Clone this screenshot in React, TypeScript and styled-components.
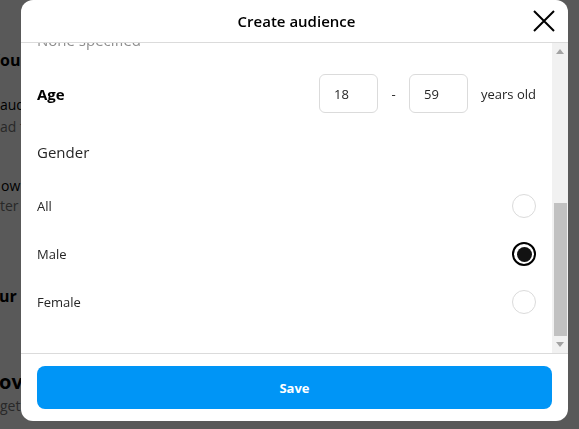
import { useLayoutEffect, useRef } from 'react';
import styled, { createGlobalStyle } from 'styled-components';

const GlobalStyle = createGlobalStyle`
  * {
    box-sizing: border-box;
  }

  html,
  body {
    margin: 0;
    padding: 0;
    height: 100%;
    overflow: hidden;
    background: #ffffff;
    font-family: 'Open Sans', 'Noto Sans', sans-serif;
    color: #262626;
  }
`;

/* page behind the modal, only its left strip shows */

const Page = styled.main`
  width: 21px;
  overflow: hidden;
  display: flex;
  flex-direction: column;
  padding-top: 50px;
`;

const BackLine = styled.div<{ $shift?: number; $top: number; $bold?: boolean; $muted?: boolean; $size?: number }>`
  margin-top: ${(p) => p.$top}px;
  margin-left: ${(p) => p.$shift ?? 0}px;
  font-size: ${(p) => p.$size ?? 14}px;
  line-height: 20px;
  font-weight: ${(p) => (p.$bold ? 700 : 400)};
  color: ${(p) => (p.$muted ? '#737373' : '#000000')};
  white-space: nowrap;
`;

/* overlay + modal */

const Overlay = styled.div`
  position: fixed;
  inset: 0;
  background: rgba(0, 0, 0, 0.65);
  display: flex;
  align-items: flex-start;
  padding-left: 21px;
`;

const Modal = styled.div`
  width: 547px;
  height: 421px;
  background: #ffffff;
  border-radius: 12px;
  display: flex;
  flex-direction: column;
  overflow: hidden;
`;

const Header = styled.header`
  height: 43px;
  flex: none;
  border-bottom: 1px solid #dbdbdb;
  display: grid;
  grid-template-columns: 1fr auto 1fr;
  align-items: center;
  padding: 0 12px 0 16px;
`;

const Title = styled.h1`
  grid-column: 2;
  margin: 0;
  font-size: 15px;
  font-weight: 600;
  color: #000000;
`;

const CloseButton = styled.button`
  grid-column: 3;
  justify-self: end;
  border: 0;
  padding: 0;
  background: none;
  display: flex;
  cursor: pointer;
`;

const BodyFrame = styled.div`
  flex: 1;
  min-height: 0;
  display: flex;
`;

const Body = styled.div`
  flex: 1;
  overflow: hidden;
  padding: 24px 16px 27px;
`;

/* classic scrollbar, thumb sits at the bottom since the body is scrolled down */

const ScrollBar = styled.div`
  width: 16px;
  flex: none;
  background: #f1f1f1;
  display: flex;
  flex-direction: column;
`;

const ScrollArrow = styled.div`
  height: 17px;
  flex: none;
  display: flex;
  align-items: center;
  justify-content: center;
`;

const ScrollTrack = styled.div`
  flex: 1;
  display: flex;
  flex-direction: column;
  justify-content: flex-end;
  padding: 0 1px 0 2px;
`;

const ScrollThumb = styled.div<{ $size: number }>`
  height: ${(p) => p.$size}px;
  background: #c1c1c1;
`;

const Field = styled.section`
  display: flex;
  flex-direction: column;
  gap: 8px;
  padding-bottom: 28px;
`;

const FieldLabel = styled.h2`
  margin: 0;
  font-size: 15px;
  line-height: 24px;
  font-weight: 700;
  color: #000000;
`;

const Hint = styled.p`
  margin: 0;
  font-size: 15px;
  line-height: 20px;
  color: #8e8e8e;
`;

const NameInput = styled.input`
  height: 40px;
  margin-top: 4px;
  border: 1px solid #dbdbdb;
  border-radius: 6px;
  padding: 0 15px;
  font: inherit;
  font-size: 13px;
`;

const AgeRow = styled.div`
  display: flex;
  align-items: center;
  height: 39px;
  margin-top: 24px;
`;

const AgeLabel = styled(FieldLabel)`
  flex: 1;
`;

const AgeInput = styled.input`
  width: 59px;
  height: 39px;
  border: 1px solid #dbdbdb;
  border-radius: 6px;
  padding: 0 14px;
  font: inherit;
  font-size: 13px;
  color: #262626;
  outline: none;
`;

const Dash = styled.span`
  width: 31px;
  text-align: center;
  font-size: 13px;
`;

const Unit = styled.span`
  margin-left: 13px;
  font-size: 13px;
  color: #262626;
`;

const GenderLabel = styled.h3`
  margin: 27px 0 18px;
  font-size: 15px;
  line-height: 24px;
  font-weight: 400;
  color: #262626;
`;

const OptionRow = styled.label`
  height: 48px;
  display: flex;
  align-items: center;
  justify-content: space-between;
  font-size: 13px;
  color: #262626;
  cursor: pointer;
`;

const Radio = styled.span<{ $checked: boolean }>`
  width: 24px;
  height: 24px;
  border-radius: 50%;
  border: ${(p) => (p.$checked ? '2px solid #000000' : '1px solid #dbdbdb')};
  display: flex;
  align-items: center;
  justify-content: center;

  &::after {
    content: '';
    display: ${(p) => (p.$checked ? 'block' : 'none')};
    width: 15px;
    height: 15px;
    border-radius: 50%;
    background: #121212;
  }
`;

const Footer = styled.footer`
  flex: none;
  border-top: 1px solid #dbdbdb;
  padding: 12px 16px;
`;

const SaveButton = styled.button`
  width: 100%;
  height: 43px;
  border: 0;
  border-radius: 8px;
  background: #0095f6;
  color: #ffffff;
  font-family: inherit;
  font-size: 13px;
  font-weight: 700;
  cursor: pointer;
`;

const genders = [
  { label: 'All', checked: false },
  { label: 'Male', checked: true },
  { label: 'Female', checked: false },
];

export default function App() {
  const bodyRef = useRef<HTMLDivElement>(null);

  useLayoutEffect(() => {
    if (bodyRef.current) bodyRef.current.scrollTop = bodyRef.current.scrollHeight;
  }, []);

  return (
    <>
      <GlobalStyle />
      <Page>
        <BackLine $top={0} $shift={-10} $bold $size={16}>You</BackLine>
        <BackLine $top={25}>audi</BackLine>
        <BackLine $top={2} $muted>ad f</BackLine>
        <BackLine $top={39} $shift={1}>ow</BackLine>
        <BackLine $top={0} $muted>ter</BackLine>
        <BackLine $top={70} $shift={-1} $bold $size={16}>ur</BackLine>
        <BackLine $top={66} $shift={-1} $bold $size={20}>ove</BackLine>
        <BackLine $top={4} $muted>get</BackLine>
      </Page>
      <Overlay>
        <Modal>
          <Header>
            <Title>Create audience</Title>
            <CloseButton aria-label="Close">
              <svg width="24" height="24" viewBox="0 0 24 24">
                <path d="M2 2 L22 22 M22 2 L2 22" stroke="#000" strokeWidth="2" />
              </svg>
            </CloseButton>
          </Header>
          <BodyFrame>
            <Body ref={bodyRef}>
              <Field>
                <FieldLabel>Audience name</FieldLabel>
                <NameInput placeholder="Enter a name" />
              </Field>
              <Field>
                <FieldLabel>Interests</FieldLabel>
                <Hint>None specified</Hint>
              </Field>
              <Field>
                <FieldLabel>Languages</FieldLabel>
                <Hint>None specified</Hint>
              </Field>
              <Field style={{ paddingBottom: 0 }}>
                <FieldLabel>Locations</FieldLabel>
                <Hint>None specified</Hint>
              </Field>
              <AgeRow>
                <AgeLabel>Age</AgeLabel>
                <AgeInput defaultValue="18" />
                <Dash>-</Dash>
                <AgeInput defaultValue="59" />
                <Unit>years old</Unit>
              </AgeRow>
              <GenderLabel>Gender</GenderLabel>
              {genders.map((g) => (
                <OptionRow key={g.label}>
                  {g.label}
                  <Radio $checked={g.checked} />
                </OptionRow>
              ))}
            </Body>
            <ScrollBar>
              <ScrollArrow>
                <svg width="8" height="5" viewBox="0 0 8 5">
                  <polygon points="0,5 4,0 8,5" fill="#a3a3a3" />
                </svg>
              </ScrollArrow>
              <ScrollTrack>
                <ScrollThumb $size={133} />
              </ScrollTrack>
              <ScrollArrow>
                <svg width="8" height="5" viewBox="0 0 8 5">
                  <polygon points="0,0 8,0 4,5" fill="#a3a3a3" />
                </svg>
              </ScrollArrow>
            </ScrollBar>
          </BodyFrame>
          <Footer>
            <SaveButton>Save</SaveButton>
          </Footer>
        </Modal>
      </Overlay>
    </>
  );
}
